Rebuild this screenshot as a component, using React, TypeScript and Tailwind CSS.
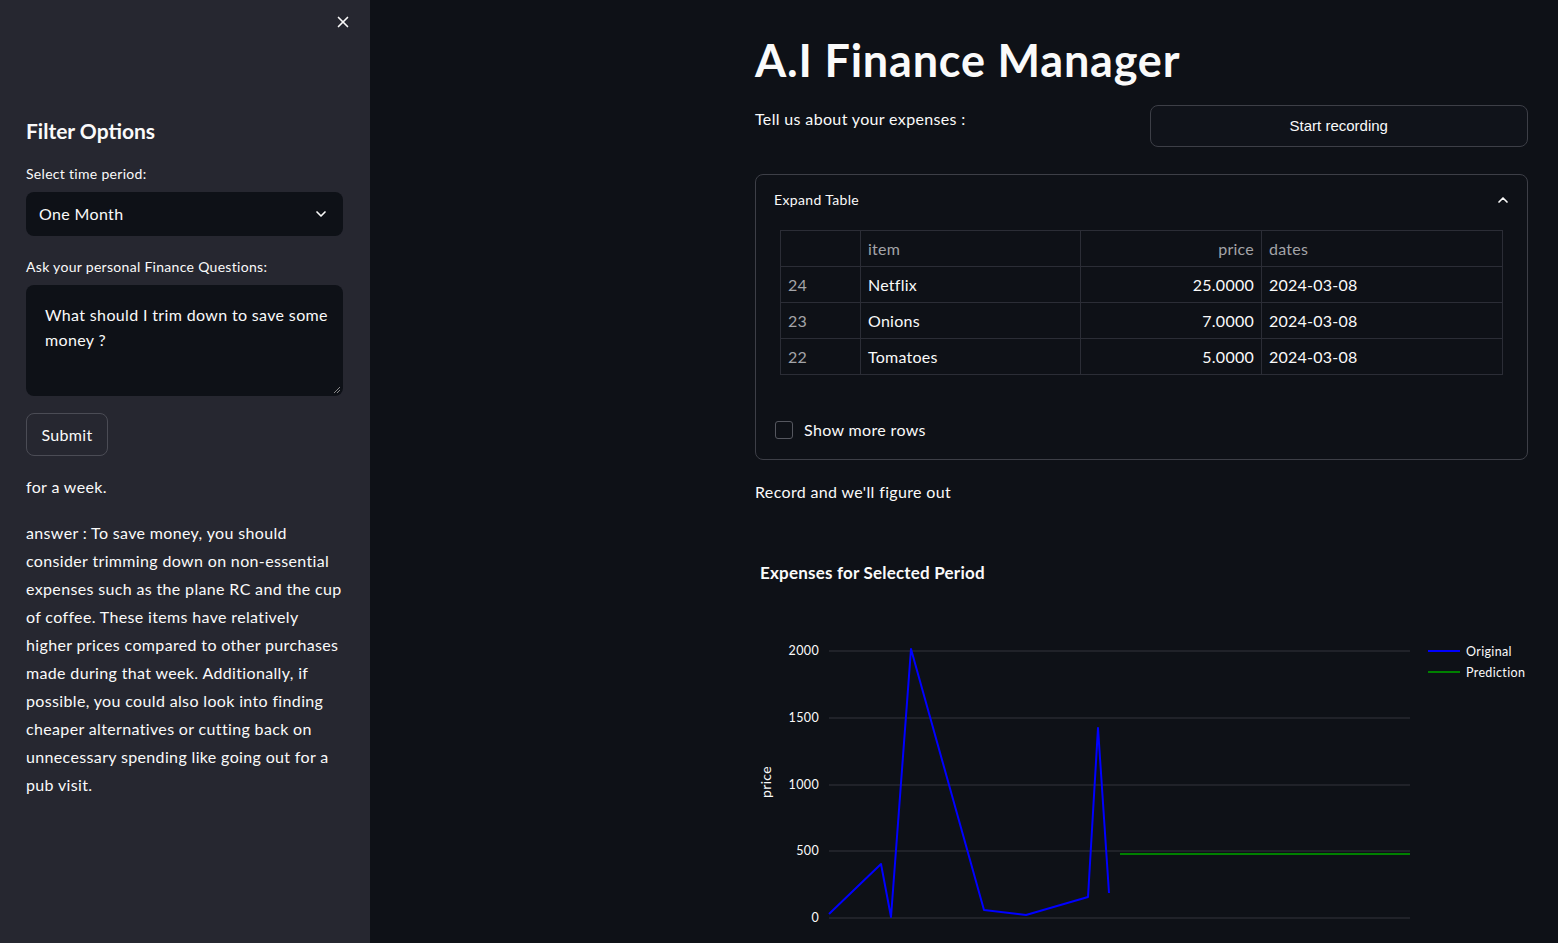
import { X, ChevronDown, ChevronUp } from 'lucide-react'

const rows = [
  { idx: '24', item: 'Netflix', price: '25.0000', date: '2024-03-08' },
  { idx: '23', item: 'Onions', price: '7.0000', date: '2024-03-08' },
  { idx: '22', item: 'Tomatoes', price: '5.0000', date: '2024-03-08' },
]

const original = [
  [74, 313], [126, 263], [136, 316], [156, 48], [229, 309],
  [271, 314], [333, 296], [343, 127], [354, 292],
]

function ExpenseChart() {
  const ticks = [
    { label: '2000', y: 51 },
    { label: '1500', y: 118 },
    { label: '1000', y: 185 },
    { label: '500', y: 251 },
    { label: '0', y: 318 },
  ]
  return (
    <svg width="773" height="343" className="block">
      {ticks.map((t) => (
        <g key={t.label}>
          <line x1="74" x2="655" y1={t.y} y2={t.y} stroke="#33353d" strokeWidth="1" />
          <text x="64" y={t.y + 4} textAnchor="end" fontSize="12.5" fill="#fafafa" fontFamily="Lato, sans-serif">
            {t.label}
          </text>
        </g>
      ))}
      <text
        x="16"
        y="182"
        transform="rotate(-90 16 182)"
        textAnchor="middle"
        fontSize="14"
        fill="#fafafa"
        fontFamily="Lato, sans-serif"
      >
        price
      </text>
      <polyline
        points={original.map((p) => `${p[0]},${p[1] + 1}`).join(' ')}
        fill="none"
        stroke="#0000ff"
        strokeWidth="2"
        strokeLinejoin="round"
      />
      <line x1="365" x2="655" y1="254" y2="254" stroke="#008000" strokeWidth="2" />

      {/* legend */}
      <line x1="673" x2="705" y1="51" y2="51" stroke="#0000ff" strokeWidth="2" />
      <text x="711" y="56" fontSize="12.5" fill="#fafafa" fontFamily="Lato, sans-serif">Original</text>
      <line x1="673" x2="705" y1="72" y2="72" stroke="#008000" strokeWidth="2" />
      <text x="711" y="77" fontSize="12.5" fill="#fafafa" fontFamily="Lato, sans-serif">Prediction</text>
    </svg>
  )
}

export default function App() {
  return (
    <div
      className="flex h-screen w-full overflow-hidden bg-[#0e1117] text-[#fafafa] tracking-[0.35px]"
      style={{ fontFamily: 'Lato, "Noto Sans", sans-serif' }}
    >
      {/* Sidebar */}
      <aside className="w-[370px] shrink-0 h-full bg-[#262730] pl-[26px] pr-[27px]">
        <div className="flex justify-end pt-[13px] -mr-[9px]">
          <X size={18} strokeWidth={2.2} />
        </div>

        <h2 className="mt-[85px] text-[21px] font-bold leading-[30px] tracking-normal">Filter Options</h2>

        <p className="mt-[18px] text-[14px] leading-[20px] tracking-[0.3px]">Select time period:</p>
        <div className="mt-[8px] h-[44px] rounded-lg bg-[#0e1117] flex items-center justify-between pl-[13px] pr-[14px]">
          <span className="text-[16px]">One Month</span>
          <ChevronDown size={16} strokeWidth={2.5} />
        </div>

        <p className="mt-[21px] text-[14px] leading-[20px] tracking-[0.3px]">Ask your personal Finance Questions:</p>
        <div className="mt-[8px] h-[111px] rounded-lg bg-[#0e1117] relative pl-[19px] pr-[14px] pt-[17px]">
          <p className="text-[16px] leading-[25px]">What should I trim down to save some money ?</p>
          <svg className="absolute right-[2px] bottom-[2px]" width="8" height="8" viewBox="0 0 8 8">
            <line x1="1" y1="7" x2="7" y2="1" stroke="#888" strokeWidth="1" />
            <line x1="4" y1="7" x2="7" y2="4" stroke="#888" strokeWidth="1" />
          </svg>
        </div>

        <button className="mt-[17px] h-[43px] w-[82px] rounded-lg border border-[#4b4c55] text-[16px] flex items-center justify-center">
          Submit
        </button>

        <p className="mt-[17px] text-[16px] leading-[28px]">for a week.</p>
        <p className="mt-[18px] text-[16px] leading-[28px]">
          answer : To save money, you should consider trimming down on non-essential expenses such as the plane RC
          and the cup of coffee. These items have relatively higher prices compared to other purchases made during
          that week. Additionally, if possible, you could also look into finding cheaper alternatives or cutting
          back on unnecessary spending like going out for a pub visit.
        </p>
      </aside>

      {/* Main */}
      <main className="flex-1 h-full pl-[385px] pr-[30px]">
        <h1 className="mt-[33px] text-[45px] font-bold leading-[54px] tracking-[0.8px]">A.I Finance Manager</h1>

        <div className="mt-[17px] flex gap-4">
          <div className="flex-1 pt-[4px]">
            <p className="text-[16px] leading-[22px]">Tell us about your expenses :</p>
          </div>
          <div className="flex-1 pt-[1px]">
            <button
              className="w-full h-[42px] rounded-lg border border-[#3d3f47] bg-[#10131a] text-[15px] tracking-normal flex items-center justify-center"
              style={{ fontFamily: '"Liberation Sans", Arial, sans-serif' }}
            >
              Start recording
            </button>
          </div>
        </div>

        {/* Expander */}
        <div className="mt-[27px] rounded-lg border border-[#3d3f47] h-[286px] px-[18px]">
          <div className="flex items-center justify-between h-[49px]">
            <span className="text-[14px]">Expand Table</span>
            <ChevronUp size={16} strokeWidth={2.5} className="-mr-[2px]" />
          </div>

          <table className="mt-[6px] ml-[6px] w-[723px] border-collapse border border-[#2b2d36] text-[16px] tracking-[0.25px]">
            <thead>
              <tr className="h-[36px]">
                <th className="w-[80px] border border-[#2b2d36]"></th>
                <th className="w-[220px] border border-[#2b2d36] text-left font-normal text-[#a3a4a8] px-[7px]">item</th>
                <th className="w-[181px] border border-[#2b2d36] text-right font-normal text-[#a3a4a8] px-[7px]">price</th>
                <th className="border border-[#2b2d36] text-left font-normal text-[#a3a4a8] px-[7px]">dates</th>
              </tr>
            </thead>
            <tbody>
              {rows.map((r) => (
                <tr key={r.idx} className="h-[36px]">
                  <td className="border border-[#2b2d36] px-[7px] text-[#a3a4a8]">{r.idx}</td>
                  <td className="border border-[#2b2d36] px-[7px]">{r.item}</td>
                  <td className="border border-[#2b2d36] px-[7px] text-right">{r.price}</td>
                  <td className="border border-[#2b2d36] px-[7px]">{r.date}</td>
                </tr>
              ))}
            </tbody>
          </table>

          <label className="mt-[43px] flex items-center gap-[11px] ml-[1px]">
            <span className="w-[18px] h-[18px] rounded-[3px] border border-[#55575f]"></span>
            <span className="text-[16px]">Show more rows</span>
          </label>
        </div>

        <p className="mt-[21px] text-[16px] leading-[22px]">Record and we'll figure out</p>

        <h3 className="mt-[59px] ml-[5px] text-[17px] font-bold leading-[22px] tracking-[0.2px]">Expenses for Selected Period</h3>

        <div className="mt-[16px]">
          <ExpenseChart />
        </div>
      </main>
    </div>
  )
}
